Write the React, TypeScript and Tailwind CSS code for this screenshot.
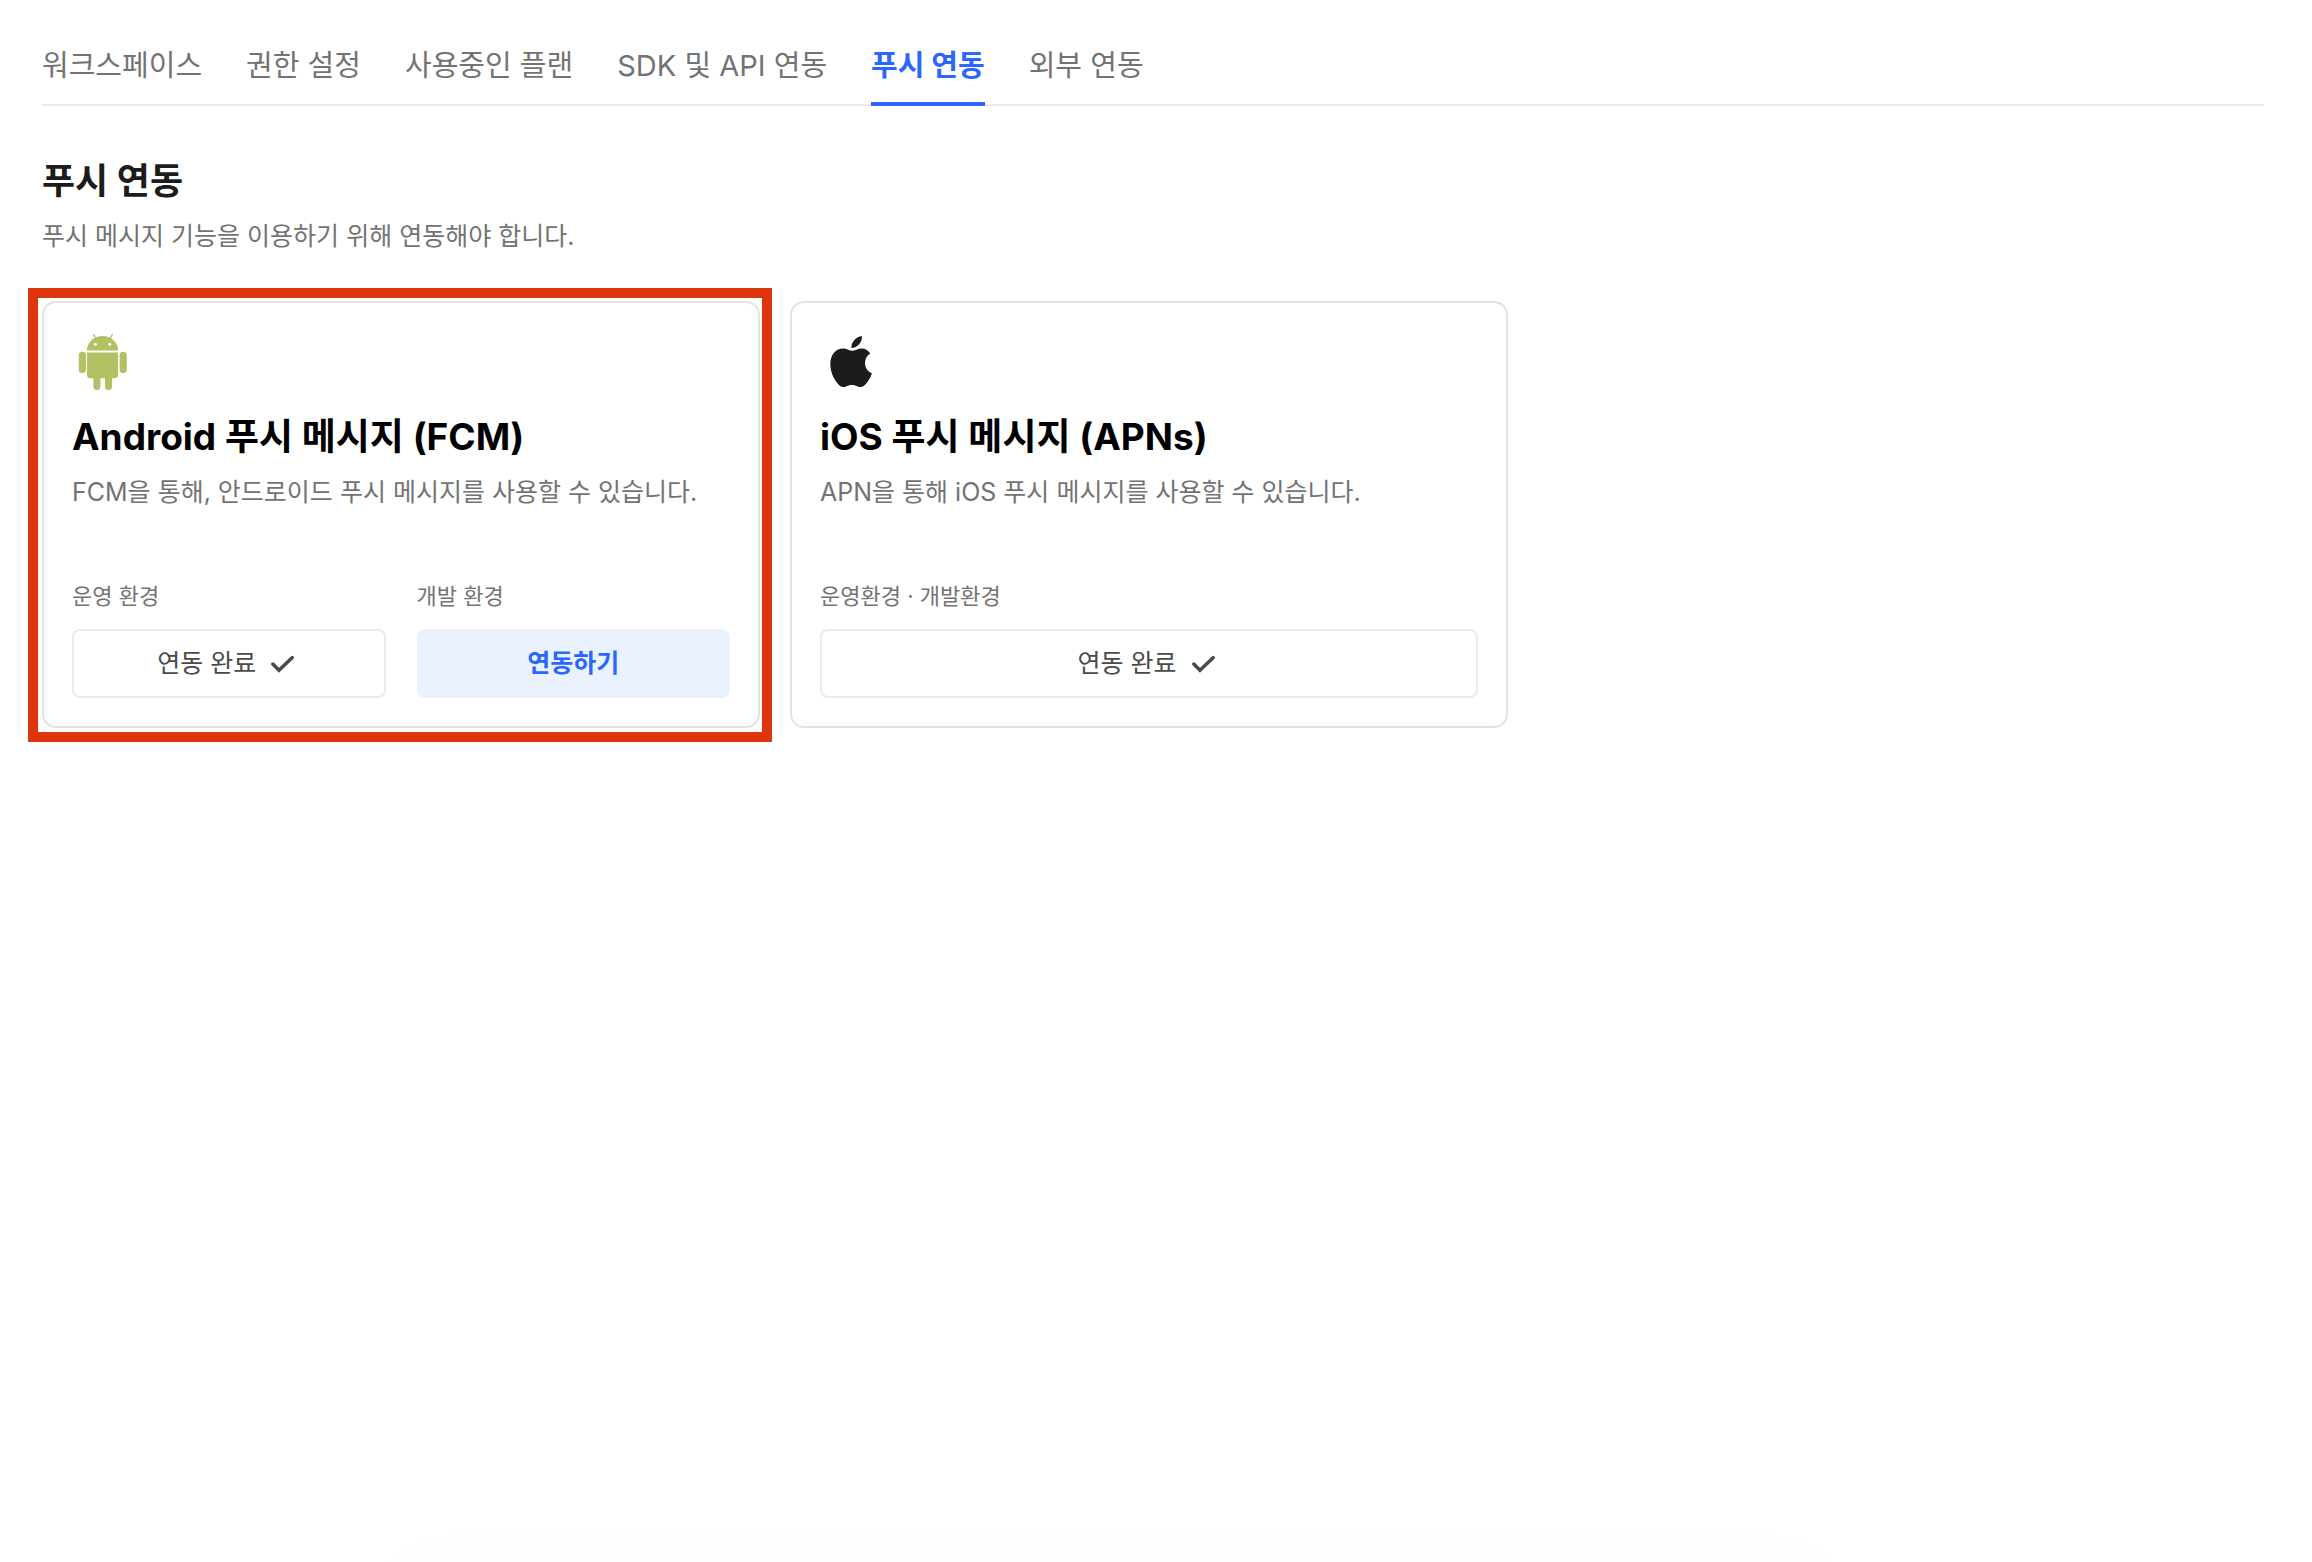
import type { ReactNode } from "react";

const tabs = ["워크스페이스", "권한 설정", "사용중인 플랜", "SDK 및 API 연동", "푸시 연동", "외부 연동"];
const activeTab = "푸시 연동";

const AndroidIcon = () => (
  <svg className="size-15" viewBox="0 0 60 60" fill="#b1c264" aria-hidden="true">
    <path d="M15 18.4a15.5 14.4 0 0 1 31 0z" />
    <path d="M21.6 2.4l3 5.4M40.4 2.4l-3 5.4" stroke="#b1c264" strokeWidth="1.2" strokeLinecap="round" />
    <path d="M15 20.4h31v22.3a3.6 3.6 0 0 1-3.6 3.6H18.6a3.6 3.6 0 0 1-3.6-3.6z" />
    <rect x="6.8" y="19.7" width="7.2" height="21.4" rx="3.6" />
    <rect x="47.6" y="19.7" width="7.2" height="21.4" rx="3.6" />
    <rect x="21.4" y="36" width="7" height="22" rx="3.5" />
    <rect x="33" y="36" width="7" height="22" rx="3.5" />
    <circle cx="23.4" cy="12.2" r="1.5" fill="#fff" />
    <circle cx="37.6" cy="12.2" r="1.5" fill="#fff" />
  </svg>
);

const AppleIcon = () => (
  <svg className="size-15" viewBox="0 0 60 60" fill="#1c1c1c" aria-hidden="true">
    <g transform="translate(1.3 0)">
      <path d="M40.6 4c.5 6.2-4.5 12-10.4 12C29.6 9.8 35 4.6 40.6 4z" />
      <path d="M48.9 21.5c-3.3 2.1-5.2 5.5-5.2 9.5 0 4.7 2.7 8.6 6.9 10.300-1.300 4-3.200 7.300-5.700 10.300-1.800 2.100-3.300 3.400-5.500 3.400-3.700 0-4.700-2-8.800-2-4 0-5.400 2-8.800 2-2.200 0-3.900-1.500-5.700-3.800C11.600 45.800 9 38.500 9 32c0-9.500 5.500-15.600 12.800-15.600 3.900 0 6.600 2.300 9.200 2.300 2.500 0 5.500-2.300 9.700-2.300 3.500 0 6.400 2 8.200 5.100z" />
    </g>
  </svg>
);

const CheckIcon = () => (
  <svg
    className="size-9"
    viewBox="0 0 36 36"
    fill="none"
    stroke="#4a4a4a"
    strokeWidth="3.5"
    strokeLinecap="round"
    aria-hidden="true"
  >
    <path d="M8.8 18l6.200 6.200L28.300 11.600" />
  </svg>
);

const DoneButton = () => (
  <button className="flex h-[69px] w-full items-center justify-center gap-2 rounded-lg border-2 border-[#ebebeb] bg-white text-[25px] text-[#4a4a4a]">
    연동 완료
    <CheckIcon />
  </button>
);

const ConnectButton = () => (
  <button className="flex h-[69px] w-full items-center justify-center rounded-lg bg-[#ebf2ff] text-[25px] font-bold text-[#2b66ff]">
    연동하기
  </button>
);

type EnvironmentProps = {
  label: string;
  children: ReactNode;
};

const Environment = ({ label, children }: EnvironmentProps) => (
  <div className="flex flex-1 flex-col gap-[17px]">
    <span className="text-[22px] leading-8 text-[#737373]">{label}</span>
    {children}
  </div>
);

type PushCardProps = {
  icon: ReactNode;
  title: string;
  description: string;
  children: ReactNode;
};

const PushCard = ({ icon, title, description, children }: PushCardProps) => (
  <article className="flex w-full flex-col rounded-[14px] border-2 border-[#e3e3e3] bg-white px-7 pt-[29px] pb-7">
    {icon}
    <h2 className="mt-5 text-[37px] leading-[50px] font-bold text-black">{title}</h2>
    <p className="mt-2.5 text-[25px] leading-10 text-[#737373]">{description}</p>
    <div className="mt-[68px] flex gap-[31px]">{children}</div>
  </article>
);

const App = () => {
  return (
    <div className="overflow-hidden bg-white pt-[45px] pr-12 pb-16 pl-[42px] font-[Inter,'Noto_Sans_CJK_KR',sans-serif]">
      <nav className="flex gap-11 border-b-2 border-[#ebebeb]">
        {tabs.map((tab) => (
          <a
            key={tab}
            href="#"
            className={
              tab === activeTab
                ? "-mb-0.5 border-b-4 border-[#2b66ff] pb-[15px] text-[29px] leading-[42px] font-bold text-[#2b66ff]"
                : "pb-[15px] text-[29px] leading-[42px] text-[#737373]"
            }
          >
            {tab}
          </a>
        ))}
      </nav>

      <header className="mt-[49px]">
        <h1 className="text-[36px] leading-[52px] font-bold text-[#1c1c1c]">푸시 연동</h1>
        <p className="mt-[9px] text-[25px] leading-10 text-[#737373]">
          푸시 메시지 기능을 이용하기 위해 연동해야 합니다.
        </p>
      </header>

      <main className="mt-[45px] grid max-w-[1466px] grid-cols-2 gap-[30px]">
        <div className="relative flex">
          <PushCard
            icon={<AndroidIcon />}
            title="Android 푸시 메시지 (FCM)"
            description="FCM을 통해, 안드로이드 푸시 메시지를 사용할 수 있습니다."
          >
            <Environment label="운영 환경">
              <DoneButton />
            </Environment>
            <Environment label="개발 환경">
              <ConnectButton />
            </Environment>
          </PushCard>
          <div className="pointer-events-none absolute -top-[13px] -right-3 -bottom-3.5 -left-3.5 border-10 border-[#df350d]" />
        </div>

        <PushCard
          icon={<AppleIcon />}
          title="iOS 푸시 메시지 (APNs)"
          description="APN을 통해 iOS 푸시 메시지를 사용할 수 있습니다."
        >
          <Environment label="운영환경 · 개발환경">
            <DoneButton />
          </Environment>
        </PushCard>
      </main>

      <div className="pointer-events-none fixed top-full right-[490px] left-[400px] h-24 rounded-3xl shadow-[0_0_60px_rgba(0,0,0,0.025)]" />
    </div>
  );
};

export default App;
